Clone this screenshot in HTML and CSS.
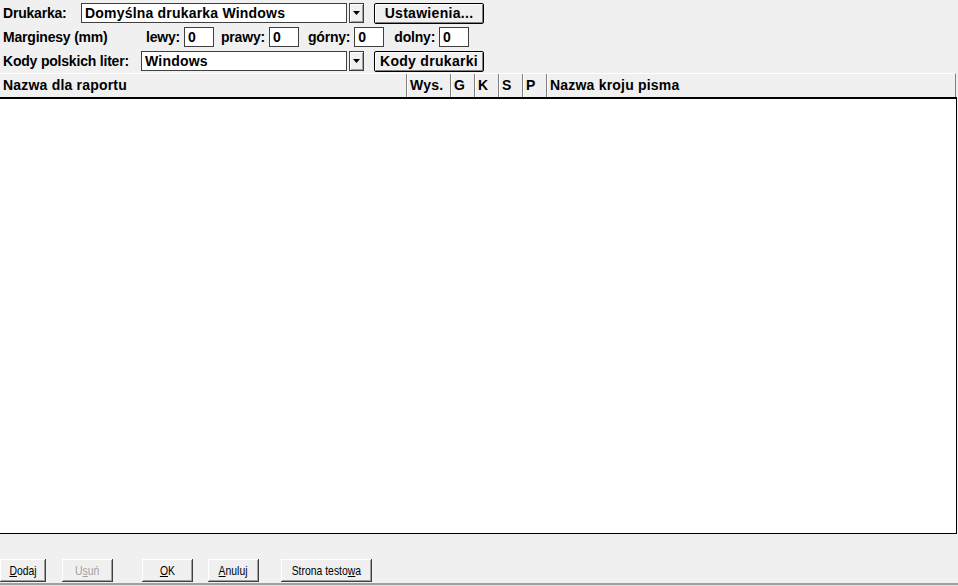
FILE: index.html
```html
<!DOCTYPE html>
<html lang="pl">
<head>
    <meta charset="UTF-8">
    <title>Ustawienia wydruku</title>
    <link rel="stylesheet" href="styles.css">
</head>
<body>
    <div class="form">
        <div class="row">
            <span class="label lbl-printer">Drukarka:</span>
            <div class="combo combo-printer">Domyślna drukarka Windows</div>
            <div class="drop"><svg width="7" height="4" viewBox="0 0 7 4"><path d="M0 0h7L3.5 4z" fill="#000"/></svg></div>
            <button class="btn">Ustawienia...</button>
        </div>
        <div class="row">
            <span class="label lbl-margins">Marginesy (mm)</span>
            <span class="label m-lbl">lewy:</span><div class="num">0</div>
            <span class="label m-lbl m-prawy">prawy:</span><div class="num">0</div>
            <span class="label m-lbl m-gorny">górny:</span><div class="num">0</div>
            <span class="label m-lbl m-dolny">dolny:</span><div class="num">0</div>
        </div>
        <div class="row">
            <span class="label lbl-codes">Kody polskich liter:</span>
            <div class="combo combo-codes">Windows</div>
            <div class="drop"><svg width="7" height="4" viewBox="0 0 7 4"><path d="M0 0h7L3.5 4z" fill="#000"/></svg></div>
            <button class="btn">Kody drukarki</button>
        </div>
    </div>

    <div class="list-head">
        <div class="col c-name">Nazwa dla raportu</div>
        <div class="col c-wys">Wys.</div>
        <div class="col c-flag">G</div>
        <div class="col c-flag">K</div>
        <div class="col c-flag">S</div>
        <div class="col c-flag">P</div>
        <div class="col c-font">Nazwa kroju pisma</div>
    </div>
    <div class="list-body"></div>

    <div class="footer">
        <button class="fbtn b-dodaj"><span><u>D</u>odaj</span></button>
        <button class="fbtn b-usun" disabled><span>U<u>s</u>uń</span></button>
        <button class="fbtn b-ok"><span><u>O</u>K</span></button>
        <button class="fbtn b-anuluj"><span><u>A</u>nuluj</span></button>
        <button class="fbtn b-test"><span>Strona testo<u>w</u>a</span></button>
    </div>
    <div class="bottom-edge"></div>
</body>
</html>
```

FILE: styles.css
```css
body {
    margin: 0;
    width: 958px;
    height: 586px;
    overflow: hidden;
    background: #f0f0f0;
    color: #000;
    font-family: "Liberation Sans", Arial, sans-serif;
    font-size: 14px;
    font-weight: bold;
}

.form {
    padding: 3px 0 0 3px;
    height: 70px;
}

.row {
    display: flex;
    align-items: center;
    height: 20px;
    margin-bottom: 4px;
}

.label {
    letter-spacing: -0.2px;
}

.lbl-printer { width: 78px; }
.lbl-margins { width: 143px; }
.lbl-codes { width: 138px; }

.m-lbl { margin-right: 4px; }
.m-prawy { margin-left: 7px; }
.m-gorny { margin-left: 9px; }
.m-dolny { margin-left: 10px; }

.combo, .num {
    box-sizing: border-box;
    height: 20px;
    background: #fff;
    border: 1px solid #404040;
    padding: 0 3px;
    line-height: 18px;
    white-space: nowrap;
    letter-spacing: 0.2px;
}

.combo-printer { width: 266px; }
.combo-codes { width: 206px; }

.num {
    width: 30px;
}

.drop {
    box-sizing: border-box;
    width: 15px;
    height: 20px;
    margin-left: 2px;
    background: #f0f0f0;
    border: 1px solid #404040;
    box-shadow: inset 1px 1px #fff, inset -1px -1px #a0a0a0;
    display: flex;
    align-items: center;
    justify-content: center;
}

.btn {
    box-sizing: border-box;
    margin-left: 10px;
    width: 110px;
    height: 21px;
    padding: 0;
    font: inherit;
    letter-spacing: 0.3px;
    color: #000;
    background: #f0f0f0;
    border: 1px solid #000;
    border-radius: 2px;
    box-shadow: inset 1px 1px #fff, inset -1px -1px #808080;
}

.list-head {
    display: flex;
    height: 24px;
    width: 956px;
    box-sizing: border-box;
    border-top: 1px solid #fff;
    border-right: 1px solid #808080;
}

.col {
    box-sizing: border-box;
    line-height: 22px;
    padding-left: 3px;
    border-left: 1px solid #808080;
    box-shadow: inset 1px 0 #fff;
    white-space: nowrap;
    letter-spacing: 0.2px;
}

.c-name { width: 406px; border-left: none; box-shadow: none; }
.c-wys { width: 44px; }
.c-flag { width: 24px; }
.c-font { flex: 1; }

.list-body {
    width: 957px;
    height: 437px;
    box-sizing: border-box;
    background: #fff;
    border-top: 2px solid #000;
    border-right: 1px solid #000;
    border-bottom: 1px solid #000;
}

.footer {
    height: 49px;
    position: relative;
}

.fbtn {
    position: absolute;
    top: 25px;
    box-sizing: border-box;
    height: 23px;
    padding: 0;
    font-family: "Liberation Sans", Arial, sans-serif;
    font-size: 13px;
    font-weight: normal;
    color: #000;
    background: #f0f0f0;
    border: none;
    box-shadow: inset -1px -1px #404040, inset 1px 1px #fff, inset -2px -2px #a0a0a0;
    white-space: nowrap;
}

.fbtn span {
    display: inline-block;
    transform: scaleX(0.8);
}

.b-dodaj { left: 0; width: 46px; }
.b-usun { left: 62px; width: 51px; color: #a0a0a0; }
.b-ok { left: 142px; width: 51px; }
.b-anuluj { left: 208px; width: 51px; }
.b-test { left: 281px; width: 91px; }

.bottom-edge {
    height: 2px;
    border-top: 2px solid #a0a0a0;
    background: #e3e3e3;
}
```
